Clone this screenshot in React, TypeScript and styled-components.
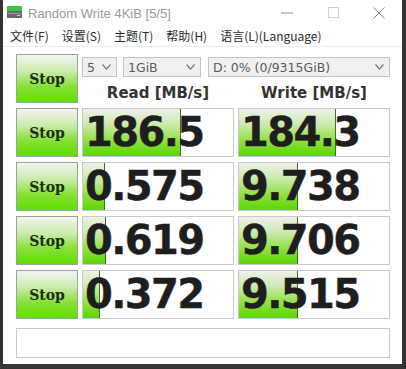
import { FC, Fragment } from "react";
import styled, { createGlobalStyle } from "styled-components";

const GlobalStyle = createGlobalStyle`
  html, body {
    margin: 0;
    padding: 0;
    background: #343434;
  }
`;

const Window = styled.div`
  margin-left: 3px;
  width: 399px;
  height: 364px;
  background: #ffffff;
  display: flex;
  flex-direction: column;
  font-family: "DejaVu Sans", sans-serif;
`;

const TitleBar = styled.div`
  height: 25px;
  display: flex;
  align-items: center;
`;

const AppIcon = styled.svg`
  margin-left: 4px;
  flex: none;
`;

const Title = styled.div`
  margin-left: 6px;
  padding-top: 1px;
  font-family: "Liberation Sans", Arial, sans-serif;
  font-size: 13px;
  color: #9a9a9a;
  flex: 1;
`;

const Caption = styled.div`
  width: 46px;
  height: 25px;
  display: flex;
  align-items: center;
  justify-content: center;
`;

const MenuBar = styled.div`
  height: 21px;
  display: flex;
  align-items: center;
  gap: 13px;
  padding-left: 7px;
  border-bottom: 1px solid #ececec;
  font-family: "Noto Sans CJK SC", "Noto Sans", sans-serif;
  font-size: 12px;
  color: #2a2a2a;
`;

const MenuItem = styled.span``;

const Content = styled.div`
  padding: 7px 0 0 13px;
`;

const Grid = styled.div`
  display: grid;
  grid-template-columns: 62px 152px 152px;
  grid-auto-rows: 49px;
  column-gap: 4px;
  row-gap: 5px;
`;

const StopButton = styled.div`
  box-sizing: border-box;
  border: 1px solid #9aa394;
  background: linear-gradient(to bottom, #f2f3f1 0%, #c9ecab 35%, #86e034 68%, #5ede00 100%);
  display: flex;
  align-items: center;
  justify-content: center;
  font-family: "DejaVu Serif", "Liberation Serif", serif;
  font-weight: bold;
  font-size: 14px;
  color: #1c2e12;
`;

const TopArea = styled.div`
  grid-column: 2 / span 2;
  display: flex;
  flex-direction: column;
`;

const SelectRow = styled.div`
  margin-top: 3px;
  display: flex;
`;

const Select = styled.div<{ $w: number; $gap: number }>`
  box-sizing: border-box;
  width: ${(p) => p.$w}px;
  margin-left: ${(p) => p.$gap}px;
  height: 20px;
  border: 1px solid #c4c4c4;
  background: #f0f0f0;
  display: flex;
  align-items: center;
  padding: 0 5px 0 4px;
  font-size: 12.5px;
  color: #5a5a5a;
`;

const SelectText = styled.span`
  flex: 1;
`;

const HeaderRow = styled.div`
  display: grid;
  grid-template-columns: 152px 152px;
  column-gap: 4px;
  padding-top: 4px;
`;

const Header = styled.div`
  text-align: center;
  font-weight: bold;
  font-size: 15px;
  line-height: 24px;
  color: #333333;
`;

const Cell = styled.div`
  position: relative;
  box-sizing: border-box;
  border: 1px solid #c9c9c9;
  background: #ffffff;
  overflow: hidden;
`;

const Bar = styled.div`
  position: absolute;
  left: 0;
  top: 0;
  bottom: 0;
  box-sizing: border-box;
  border-right: 1px solid #40701c;
  background: linear-gradient(to bottom, #eef1eb 0%, #cdeaae 32%, #8fe040 68%, #5ad600 100%);
`;

const Value = styled.div`
  position: relative;
  padding-left: 2px;
  font-weight: bold;
  font-size: 40px;
  letter-spacing: -1.6px;
  line-height: 47px;
  color: #1e1e1e;
  -webkit-text-stroke: 0.4px #1e1e1e;
`;

const Comment = styled.div`
  margin-top: 9px;
  box-sizing: border-box;
  width: 374px;
  height: 30px;
  border: 1px solid #c9c9c9;
  background: #ffffff;
`;

const Chevron: FC = () => (
  <svg width="9" height="6" viewBox="0 0 9 6">
    <polyline points="0.5,0.5 4.5,5 8.5,0.5" fill="none" stroke="#777" strokeWidth="1.2" />
  </svg>
);

const rows = [
  { read: "186.5", readBar: 98, write: "184.3", writeBar: 97 },
  { read: "0.575", readBar: 22, write: "9.738", writeBar: 59 },
  { read: "0.619", readBar: 23, write: "9.706", writeBar: 59 },
  { read: "0.372", readBar: 17, write: "9.515", writeBar: 59 },
];

const App: FC = () => {
  return (
    <>
      <GlobalStyle />
      <Window>
        <TitleBar>
          <AppIcon width="15" height="13" viewBox="0 0 15 13">
            <rect x="0" y="0" width="15" height="5" fill="#3cc43c" />
            <rect x="0" y="5" width="15" height="7" fill="#6b6b6b" />
            <rect x="1" y="7" width="13" height="1" fill="#9a9a9a" />
            <rect x="10" y="9" width="3" height="1" fill="#d0d0d0" />
          </AppIcon>
          <Title>Random Write 4KiB [5/5]</Title>
          <Caption>
            <svg width="12" height="2" viewBox="0 0 12 2">
              <rect x="0" y="0.5" width="12" height="1" fill="#8a8a8a" />
            </svg>
          </Caption>
          <Caption>
            <svg width="11" height="11" viewBox="0 0 11 11">
              <rect x="0.5" y="0.5" width="10" height="10" fill="none" stroke="#d0d0d0" />
            </svg>
          </Caption>
          <Caption>
            <svg width="12" height="12" viewBox="0 0 12 12">
              <path d="M0.5 0.5 L11.5 11.5 M11.5 0.5 L0.5 11.5" stroke="#8a8a8a" strokeWidth="1" />
            </svg>
          </Caption>
        </TitleBar>
        <MenuBar>
          <MenuItem>文件(F)</MenuItem>
          <MenuItem>设置(S)</MenuItem>
          <MenuItem>主题(T)</MenuItem>
          <MenuItem>帮助(H)</MenuItem>
          <MenuItem>语言(L)(Language)</MenuItem>
        </MenuBar>
        <Content>
          <Grid>
            <StopButton>Stop</StopButton>
            <TopArea>
              <SelectRow>
                <Select $w={35} $gap={0}>
                  <SelectText>5</SelectText>
                  <Chevron />
                </Select>
                <Select $w={78} $gap={6}>
                  <SelectText>1GiB</SelectText>
                  <Chevron />
                </Select>
                <Select $w={182} $gap={7}>
                  <SelectText>D: 0% (0/9315GiB)</SelectText>
                  <Chevron />
                </Select>
              </SelectRow>
              <HeaderRow>
                <Header>Read [MB/s]</Header>
                <Header>Write [MB/s]</Header>
              </HeaderRow>
            </TopArea>
            {rows.map((r) => (
              <Fragment key={r.read}>
                <StopButton>Stop</StopButton>
                <Cell>
                  <Bar style={{ width: r.readBar }} />
                  <Value>{r.read}</Value>
                </Cell>
                <Cell>
                  <Bar style={{ width: r.writeBar }} />
                  <Value>{r.write}</Value>
                </Cell>
              </Fragment>
            ))}
          </Grid>
          <Comment />
        </Content>
      </Window>
    </>
  );
};

export default App;
